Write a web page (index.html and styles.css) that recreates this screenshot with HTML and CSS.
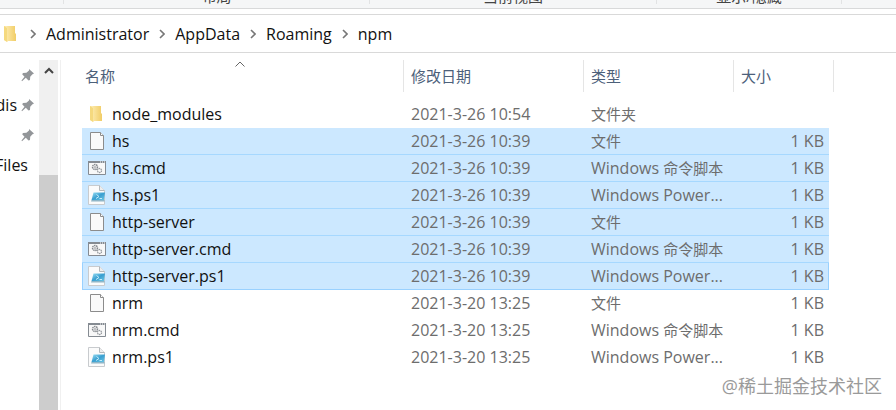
FILE: index.html
```html
<!DOCTYPE html>
<html lang="zh-CN">
<head>
    <meta charset="UTF-8">
    <meta name="viewport" content="width=device-width, initial-scale=1.0">
    <title>npm</title>
    <link rel="stylesheet" href="styles.css">
</head>
<body>
    <!-- Icons shared by the rows -->
    <svg class="sprite" aria-hidden="true">
        <defs>
            <linearGradient id="gold" x1="0" x2="1">
                <stop offset="0" stop-color="#fbe6a2"/>
                <stop offset="1" stop-color="#f1cd67"/>
            </linearGradient>
            <linearGradient id="screen" x1="0" y1="0" x2="1" y2="1">
                <stop offset="0" stop-color="#9be0f5"/>
                <stop offset=".5" stop-color="#3a9fd0"/>
                <stop offset="1" stop-color="#6cc6e6"/>
            </linearGradient>
        </defs>
        <symbol id="folder" viewBox="0 0 18 20">
            <path d="M2 2h4v16l-4-2z" fill="#fbe9b0"/>
            <path d="M5 2h8v7l1 1v7H5z" fill="url(#gold)"/>
            <path d="M2 2l3 2v14l-3-2z" fill="#f5d97e"/>
        </symbol>
        <symbol id="file" viewBox="0 0 18 20">
            <path d="M2.500 1.500h10l3 3v14h-13z" fill="#fafafa" stroke="#8c8c8c"/>
            <path d="M12.500 1.500v3h3" fill="#fff" stroke="#8c8c8c"/>
        </symbol>
        <symbol id="cmd" viewBox="0 0 18 20">
            <path d="M.5 3.500h17v13H.5z" fill="#f8f8f8" stroke="#858b92"/>
            <path d="M0 3h18v2H0z" fill="#858b92"/>
            <path d="M12 4h1M14 4h1M16 4h1" stroke="#fff"/>
            <circle cx="7" cy="9" r="2.500" fill="#fff" stroke="#83878c" stroke-width="1.400" stroke-dasharray="1.500 .6"/>
            <circle cx="7" cy="9" r="1" fill="none" stroke="#83878c" stroke-width=".6"/>
            <circle cx="11.500" cy="12.500" r="2" fill="#fff" stroke="#8f9398" stroke-width="1.300" stroke-dasharray="1.300 .6"/>
        </symbol>
        <symbol id="ps1" viewBox="0 0 18 20">
            <path d="M.5.5h11l5 5v14H.5z" fill="#fbfbfb" stroke="#c8cbce"/>
            <path d="M11.500.5v5h5" fill="#eee" stroke="#b4b8bb"/>
            <path d="M5.500 7.500h11.500l-1 7.500H3.500z" fill="url(#screen)"/>
            <path d="M3.500 15h13v1.500H3z" fill="#8fb6c8"/>
            <path d="M8.500 9.500l2.500 2-3 2M11.500 13.500h2.500" fill="none" stroke="#c4ecf9"/>
        </symbol>
        <symbol id="pin" viewBox="0 0 14 14">
            <path d="M8 1l5 4.500-1.500.7-2.300 2.600-.2 3.200-1.500.5-2.700-2.700L1 13.200l-.5-.7 3-3.700L1.200 6.300 2 5l3.400-.3L8 2.400z" fill="#939699"/>
        </symbol>
        <symbol id="chevron" viewBox="0 0 6 10">
            <path d="M1 1l4 4-4 4" fill="none" stroke="#777" stroke-width="1.600"/>
        </symbol>
    </svg>

    <div class="ribbon">
        <span class="group"></span>
        <span class="group">布局</span>
        <span class="group">当前视图</span>
        <span class="group">显示/隐藏</span>
        <span class="group"></span>
    </div>

    <nav class="address">
        <svg class="icon"><use href="#folder"/></svg>
        <svg class="chevron"><use href="#chevron"/></svg>
        <a href="#">Administrator</a>
        <svg class="chevron"><use href="#chevron"/></svg>
        <a href="#">AppData</a>
        <svg class="chevron"><use href="#chevron"/></svg>
        <a href="#">Roaming</a>
        <svg class="chevron"><use href="#chevron"/></svg>
        <a href="#">npm</a>
    </nav>

    <div class="explorer">
        <aside class="sidebar">
            <div class="quick"><svg class="pin"><use href="#pin"/></svg></div>
            <div class="quick"><span>dis</span><svg class="pin"><use href="#pin"/></svg></div>
            <div class="quick"><svg class="pin"><use href="#pin"/></svg></div>
            <div class="quick folder"><span>Files</span></div>
        </aside>
        <div class="scrollbar">
            <button class="scroll-up" aria-label="向上滚动">
                <svg viewBox="0 0 10 7"><path d="M1 6l4-4 4 4" fill="none" stroke="#444" stroke-width="2"/></svg>
            </button>
            <div class="thumb"></div>
        </div>

        <main class="files">
            <table>
                <colgroup>
                    <col class="col-name">
                    <col class="col-date">
                    <col class="col-type">
                    <col class="col-size">
                    <col class="col-end">
                </colgroup>
                <thead>
                    <tr>
                        <th class="sorted">
                            <button>名称</button>
                            <svg class="sort" viewBox="0 0 10 6"><path d="M.5 5.500L5 1l4.500 4.500" fill="none" stroke="#666"/></svg>
                        </th>
                        <th><button>修改日期</button></th>
                        <th><button>类型</button></th>
                        <th class="last" colspan="2"><button>大小</button></th>
                    </tr>
                </thead>
                <tbody>
                    <tr>
                        <td><div class="name"><svg class="icon"><use href="#folder"/></svg>node_modules</div></td>
                        <td>2021-3-26 10:54</td>
                        <td><span class="zh">文件夹</span></td>
                        <td></td>
                    </tr>
                    <tr class="selected">
                        <td><div class="name"><svg class="icon"><use href="#file"/></svg>hs</div></td>
                        <td>2021-3-26 10:39</td>
                        <td><span class="zh">文件</span></td>
                        <td>1 KB</td>
                    </tr>
                    <tr class="selected">
                        <td><div class="name"><svg class="icon"><use href="#cmd"/></svg>hs.cmd</div></td>
                        <td>2021-3-26 10:39</td>
                        <td>Windows <span class="zh">命令脚本</span></td>
                        <td>1 KB</td>
                    </tr>
                    <tr class="selected">
                        <td><div class="name"><svg class="icon"><use href="#ps1"/></svg>hs.ps1</div></td>
                        <td>2021-3-26 10:39</td>
                        <td>Windows Power...</td>
                        <td>1 KB</td>
                    </tr>
                    <tr class="selected">
                        <td><div class="name"><svg class="icon"><use href="#file"/></svg>http-server</div></td>
                        <td>2021-3-26 10:39</td>
                        <td><span class="zh">文件</span></td>
                        <td>1 KB</td>
                    </tr>
                    <tr class="selected">
                        <td><div class="name"><svg class="icon"><use href="#cmd"/></svg>http-server.cmd</div></td>
                        <td>2021-3-26 10:39</td>
                        <td>Windows <span class="zh">命令脚本</span></td>
                        <td>1 KB</td>
                    </tr>
                    <tr class="selected focused">
                        <td><div class="name"><svg class="icon"><use href="#ps1"/></svg>http-server.ps1</div></td>
                        <td>2021-3-26 10:39</td>
                        <td>Windows Power...</td>
                        <td>1 KB</td>
                    </tr>
                    <tr>
                        <td><div class="name"><svg class="icon"><use href="#file"/></svg>nrm</div></td>
                        <td>2021-3-20 13:25</td>
                        <td><span class="zh">文件</span></td>
                        <td>1 KB</td>
                    </tr>
                    <tr>
                        <td><div class="name"><svg class="icon"><use href="#cmd"/></svg>nrm.cmd</div></td>
                        <td>2021-3-20 13:25</td>
                        <td>Windows <span class="zh">命令脚本</span></td>
                        <td>1 KB</td>
                    </tr>
                    <tr>
                        <td><div class="name"><svg class="icon"><use href="#ps1"/></svg>nrm.ps1</div></td>
                        <td>2021-3-20 13:25</td>
                        <td>Windows Power...</td>
                        <td>1 KB</td>
                    </tr>
                </tbody>
            </table>
        </main>
    </div>

    <div class="watermark">@稀土掘金技术社区</div>
</body>
</html>
```
FILE: styles.css
```css
* {
    box-sizing: border-box;
}
body {
    display: flex;
    flex-direction: column;
    height: 100vh;
    margin: 0;
    overflow: hidden;
    background-color: #fff;
    color: #111;
    font-family: "Open Sans", "Noto Sans CJK SC", sans-serif;
    font-size: 16px;
    line-height: 26px;
}
button {
    margin: 0;
    padding: 0;
    border: none;
    background: none;
    font: inherit;
    color: inherit;
    text-align: left;
}
.sprite {
    position: absolute;
    width: 0;
    height: 0;
}
.icon {
    flex: none;
    width: 18px;
    height: 20px;
}

/* Bottom edge of the ribbon */
.ribbon {
    display: grid;
    grid-template-columns: 64px 306px 287px 185px 1fr;
    grid-template-rows: 4px;
    flex: none;
    align-items: end;
    height: 9px;
    overflow: hidden;
    background-color: #f5f6f7;
    border-bottom: 1px solid #d8d9da;
}
.group {
    height: 16px;
    border-right: 1px solid #e2e3e4;
    color: #444;
    font-size: 15px;
    line-height: 16px;
    text-align: center;
}
.group:last-child {
    border-right: none;
}

.address {
    display: flex;
    flex: none;
    align-items: center;
    height: 39px;
    margin-top: 5px;
    padding-left: 2px;
    border-top: 1px solid #d9d9d9;
    border-bottom: 1px solid #d9d9d9;
}
.address a {
    color: #111;
    text-decoration: none;
}
.chevron {
    flex: none;
    width: 6px;
    height: 10px;
    margin: 0 10px;
}

.explorer {
    display: flex;
    flex: 1;
    min-height: 0;
    padding-top: 7px;
}
.sidebar {
    flex: none;
    width: 39px;
    overflow: hidden;
}
.quick {
    display: flex;
    align-items: center;
    justify-content: flex-end;
    gap: 4px;
    height: 30px;
    padding-right: 4px;
}
.quick.folder {
    padding-right: 11px;
}
.pin {
    flex: none;
    width: 14px;
    height: 14px;
}
.scrollbar {
    display: flex;
    flex: none;
    flex-direction: column;
    width: 19px;
    background-color: #f0f0f0;
}
.scroll-up {
    display: flex;
    justify-content: center;
    height: 22px;
    margin-bottom: 93px;
    padding-top: 7px;
}
.scroll-up svg {
    width: 10px;
    height: 7px;
}
.thumb {
    flex: 1;
    background-color: #cdcdcd;
}

.files {
    flex: 1;
    margin-left: 2px;
    padding-left: 21px;
    border-left: 1px solid #f0f0f0;
}
table {
    width: 752px;
    border-collapse: separate;
    border-spacing: 0;
    table-layout: fixed;
}
.col-date {
    width: 180px;
}
.col-type {
    width: 150px;
}
.col-size {
    width: 96px;
}
.col-end {
    width: 5px;
}
th {
    position: relative;
    padding: 0 0 9px;
    font-weight: normal;
}
th button {
    display: block;
    width: 100%;
    height: 32px;
    padding-left: 7px;
    border-left: 1px solid #e5e5e5;
    color: #4c607a;
    font-size: 15px;
    line-height: 30px;
}
th.sorted button {
    padding-left: 3px;
    border-left: none;
}
th.last button {
    border-right: 1px solid #e5e5e5;
}
.sort {
    position: absolute;
    top: 1px;
    left: 153px;
    width: 10px;
    height: 6px;
}
td {
    height: 27px;
    padding: 0 5px 0 8px;
    border-bottom: 1px solid transparent;
    color: #6d6d6d;
    white-space: nowrap;
}
td:first-child {
    padding-left: 6px;
    color: #111;
}
td:nth-child(4) {
    text-align: right;
}
.name {
    display: flex;
    align-items: center;
    gap: 6px;
}
.zh {
    font-size: 15px;
    line-height: 1;
}
.selected td {
    background-color: #cce8ff;
    border-bottom-color: #a6d8ff;
}
.focused td {
    border-bottom-color: #99d1ff;
}
.focused td:first-child {
    box-shadow: inset 1px 0 #99d1ff;
}
.focused td:last-child {
    box-shadow: inset -1px 0 #99d1ff;
}

.watermark {
    position: absolute;
    right: 14px;
    bottom: 11px;
    color: #9a9a9a;
    font-size: 18px;
}
```
